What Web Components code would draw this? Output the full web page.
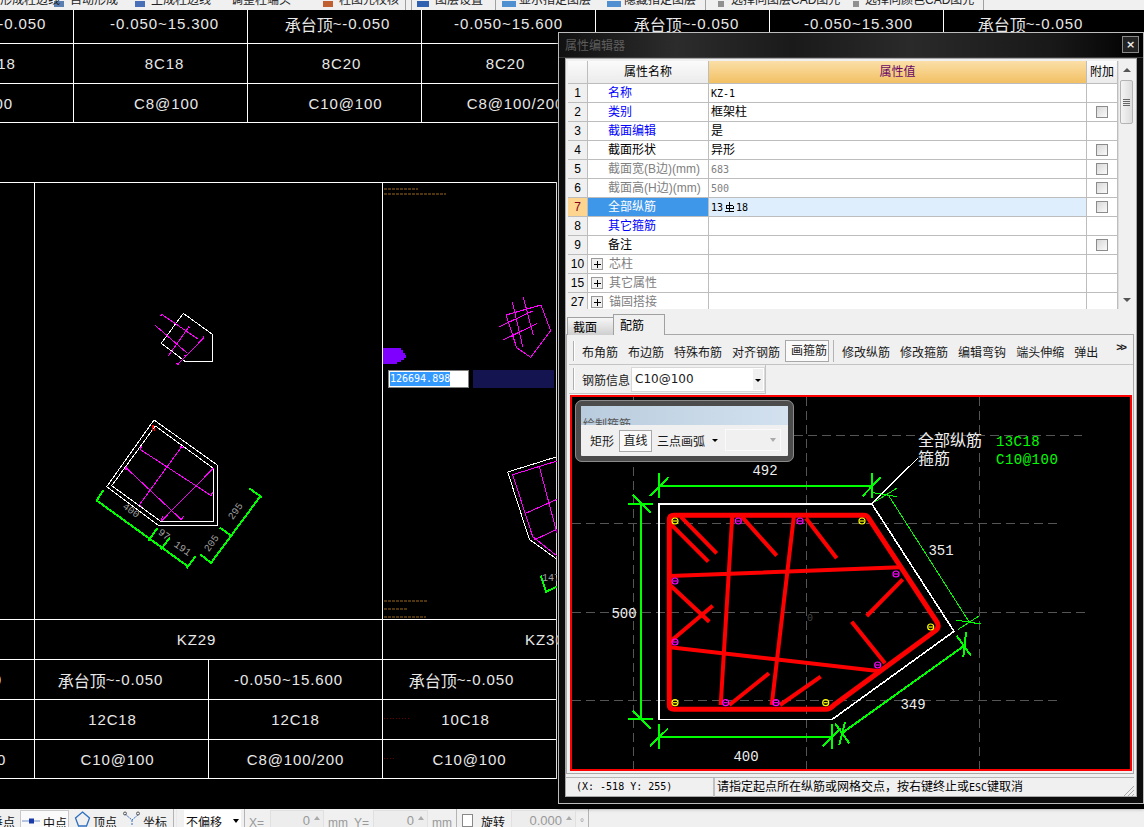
<!DOCTYPE html>
<html lang="zh">
<head>
<meta charset="utf-8">
<title>属性编辑器</title>
<style>
    html, body { margin: 0; height: 100%; background: #000; overflow: hidden; }
    body { font: 12px "Noto Sans CJK SC", "Liberation Sans", sans-serif; }
</style>
</head>
<body>
<app-shell></app-shell>
<script>
const UI_FONT = `"Liberation Sans", "Noto Sans CJK SC", sans-serif`;
const CAD_FONT = `"Liberation Mono", "Noto Sans CJK SC", monospace`;
const TABLE_FONT = `"Liberation Sans", "Noto Sans CJK SC", sans-serif`;
const SMALL_MONO = `"DejaVu Sans Mono", "Noto Sans CJK SC", monospace`;

class TopBar extends HTMLElement {
    constructor() {
        super();
        this.attachShadow({ mode: 'open' });
        this.shadowRoot.innerHTML = `
            <style>
                :host {
                    display: flex;
                    align-items: flex-end;
                    height: 10px;
                    overflow: hidden;
                    background: #f0f0f0;
                    font: 12px ${UI_FONT};
                    color: #222;
                    white-space: nowrap;
                }
                span { display: block; line-height: 16px; position: relative; top: -2px; flex: none; }
                i { display: block; flex: none; width: 10px; height: 6px; margin-bottom: 3px; }
                b { display: block; flex: none; width: 1px; height: 10px; background: #a0a0a0; }
            </style>
            <span style="width:50px">形成柱边线</span>
            <i style="margin-left:4px;background:#5a7fb0"></i>
            <span style="margin-left:6px;width:50px">自动形成</span>
            <i style="margin-left:15px;background:#4870b8"></i>
            <span style="margin-left:6px;width:72px">生成柱边线</span>
            <span style="margin-left:8px;width:82px">调整柱端头</span>
            <i style="margin-left:10px;background:#c06030"></i>
            <span style="margin-left:6px;width:60px">柱图元校核</span>
            <b style="margin-left:6px"></b>
            <b style="margin-left:5px"></b>
            <i style="margin-left:5px;background:#3060b0;width:12px"></i>
            <span style="margin-left:6px;width:56px">图层设置</span>
            <b style="margin-left:4px"></b>
            <i style="margin-left:6px;background:#5090d0;width:14px"></i>
            <span style="margin-left:3px;width:78px">显示指定图层</span>
            <i style="margin-left:10px;background:#5090d0;width:14px"></i>
            <span style="margin-left:3px;width:72px">隐藏指定图层</span>
            <b style="margin-left:9px"></b>
            <i style="margin-left:12px;background:#909090;width:6px"></i>
            <span style="margin-left:7px;width:118px">选择同图层CAD图元</span>
            <i style="margin-left:4px;background:#909090;width:6px"></i>
            <span style="margin-left:6px;width:112px">选择同颜色CAD图元</span>
            <b style="margin-left:6px"></b>
        `;
    }
}

class CadSheet extends HTMLElement {
    constructor() {
        super();
        this.attachShadow({ mode: 'open' });
        const wrap = t => t.replace(/[\u4e00-\u9fff]+/g, m => `<span class="c">${m}</span>`);
        const cell = (t, extra = '') => `<div class="cell" style="${extra}">${wrap(t)}</div>`;
        // [text, padding that nudges it off the centre of the cell]
        const top = [
            [['承台顶~-0.050', 'padding-left:14px'], ['-0.050~15.300', 'padding-left:8px'], ['承台顶~-0.050', 'padding-left:6px'], ['-0.050~15.600', ''], ['承台顶~-0.050', 'padding-left:8px'], ['-0.050~15.300', 'padding-left:4px'], ['承台顶~-0.050', '']],
            [['12C18', 'padding-left:10px'], ['8C18', 'padding-left:8px'], ['8C20', 'padding-left:14px'], ['8C20', 'padding-right:6px'], ['', ''], ['', ''], ['', '']],
            [['C8@100', 'padding-right:12px'], ['C8@100', 'padding-left:12px'], ['C10@100', 'padding-left:22px'], ['C8@100/200', 'padding-left:14px'], ['', ''], ['', ''], ['', '']]
        ];
        const rowStyle = ['padding-bottom:6px;', '', ''];
        const topCells = top.map((r, i) => r.map(([t, s]) => cell(t, rowStyle[i] + s)).join('')).join('');
        const end = 'border-right:1px solid #fff;width:175px;';
        const foot = 'border-bottom:1px solid #fff;';
        this.shadowRoot.innerHTML = `
            <style>
                :host {
                    display: block;
                    height: 100%;
                    background: #000;
                    color: #e8e8e8;
                    font: 15px ${TABLE_FONT};
                    letter-spacing: .9px;
                    overflow: hidden;
                }
                .grid { display: grid; grid-template-columns: repeat(7, 174px); }
                .top { margin-left: -101px; grid-template-rows: 34px 40px 39px; width: 1218px; }
                .bottom {
                    margin-left: -140px;
                    margin-top: 59px;
                    width: 697px;
                    grid-template-columns: repeat(4, 174px);
                    grid-template-rows: 437px 40px 40px 40px 40px;
                }
                .cell {
                    box-sizing: border-box;
                    display: flex;
                    align-items: center;
                    justify-content: center;
                    border-left: 1px solid #fff;
                    border-bottom: 1px solid #fff;
                    white-space: nowrap;
                }
                .bottom .cell { border-bottom: 0; border-top: 1px solid #fff; }
                .bottom .end { border-right: 1px solid #fff; width: 175px; }
                .c { font-size: 16px; letter-spacing: 0; }
            </style>
            <div class="grid top">${topCells}</div>
            <div class="grid bottom">
                ${cell('')}
                <div class="cell" style="grid-column: span 2"></div>
                <div class="cell end"></div>
                ${cell('')}
                <div class="cell" style="grid-column: span 2; padding-right: 24px">KZ29</div>
                <div class="cell end" style="justify-content:flex-start; padding-left:142px">KZ30</div>
                ${cell('-0.050~15.600')}${cell('承台顶~-0.050', 'padding-right:22px')}${cell('-0.050~15.600', 'padding-right:14px')}${cell('承台顶~-0.050', end + 'padding-right:16px')}
                ${cell('')}${cell('12C18', 'padding-right:18px')}${cell('12C18')}${cell('10C18', end + 'padding-right:8px')}
                ${cell('C8@100/200', foot + 'padding-left:20px')}${cell('C10@100', foot + 'padding-right:8px')}${cell('C8@100/200', foot)}${cell('C10@100', foot + end)}
            </div>
        `;
    }
}

class CadDrawings extends HTMLElement {
    constructor() {
        super();
        this.attachShadow({ mode: 'open' });
        this.shadowRoot.innerHTML = `
            <style>
                :host { position: absolute; left: 0; top: 0; display: block; width: 557px; height: 799px; }
                svg { display: block; }
                text { font: 10px ${CAD_FONT}; fill: #a0a0a0; text-anchor: middle; }
            </style>
            <svg width="557" height="799" viewBox="0 10 557 799" fill="none" shape-rendering="crispEdges">
                <g stroke="#fff" stroke-width="1">
                    <path d="M183.3 313.3 212.3 334.3V361.3H185L161.3 343.3Z"/>
                    <path d="M154 420 217.3 465V525.3H158.3L106.7 486.7Z"/>
                    <path d="M155.3 426 213.3 468.3V521.3H160.7L111.7 485.7Z"/>
                    <path d="M557 456.7 507.7 472 529.3 539.3 557 559.3"/>
                </g>
                <g stroke="#f0f" stroke-width="1">
                    <path d="M162.7 315 198.3 339.3M156 326 186.7 352.7M189 326.7 168.3 356M203.3 338.3 178.3 364"/>
                    <path d="M141 450 211.7 496M126.7 468.3 181.7 520M181.7 446.7 139.3 505M213.3 468.3 161.7 520.7"/>
                    <path d="M160 316 163 314M155 325 157 327M187 355 184 356M176 363 179 365M188 326 190 328M203 336 203 339"/>
                    <path d="M142 446 140 449 142 451M180 446 184 448M127 466 125 469 128 470M139 504 142 507M211 495 213 492M161 520 163 516M181 520 184 516"/>
                    <path d="M541 305 550.7 330.7 530.7 357.3 516.7 347.7 506 315Z"/>
                    <path d="M512.3 301.7 522.7 346.7M523.3 297.3 533.3 335M499.3 326.7 533.3 310.7M503.3 340 537.3 323.3"/>
                    <path d="M557 461 512.7 474.7 532.7 536.7 557 556"/>
                    <path d="M539.3 466.7 557 533.3M525.7 513.3 557 499.3M534 540 557 529.3"/>
                </g>
                <path d="M152 431 153 425 155 431" stroke="#f00" stroke-width="1"/>
                <g stroke="#0f0" stroke-width="2">
                    <path d="M96 500 188.3 566.7M103.3 490 96 501.7M157.3 528.3 148.3 540.7M170 537.3 161 549.3M195.7 556 186.7 568.3"/>
                    <path d="M210.7 563.3 260 496.7M200 554.3 211.7 563.3M220 527.7 231.7 536M249.3 488.3 261.7 497.3"/>
                    <path d="M540.7 575.7 546 591.7 557 586.7"/>
                </g>
                <text transform="translate(129.3 513) rotate(35)">400</text>
                <text transform="translate(162.3 537) rotate(35)">97</text>
                <text transform="translate(180.7 551) rotate(35)">191</text>
                <text transform="translate(214 545) rotate(-55)">205</text>
                <text transform="translate(238 513) rotate(-55)">295</text>
                <text x="551" y="581">147</text>
                <path d="M383 348h18v2h2v3h2v2h1v3h-2v2h-3v2h-4v2h-14Z" fill="#7f00ff"/>
                <g stroke="#4f3410" stroke-width="2" stroke-dasharray="3 1">
                    <path d="M384 189h34M384 194h62M384 601h44M384 609h24M384 617h42"/>
                </g>
                <g stroke="#600" stroke-width="1" stroke-dasharray="1 2">
                    <path d="M384 718h26M384 758h10"/>
                </g>
            </svg>
        `;
    }
}

class LengthInput extends HTMLElement {
    constructor() {
        super();
        this.attachShadow({ mode: 'open' });
        this.shadowRoot.innerHTML = `
            <style>
                :host {
                    position: absolute;
                    left: 388px;
                    top: 360px;
                    display: flex;
                    gap: 4px;
                    height: 18px;
                    font: 10px ${SMALL_MONO};
                }
                .box {
                    box-sizing: border-box;
                    width: 81px;
                    background: #fff;
                    border: 1px solid #808080;
                    padding: 1px 1px;
                }
                .sel { display: inline-block; background: #3399ff; color: #fff; line-height: 14px; white-space: nowrap; }
                .navy { width: 81px; background: #141450; }
            </style>
            <div class="box"><span class="sel"><slot></slot></span></div>
            <div class="navy"></div>
        `;
    }
}

class PropGrid extends HTMLElement {
    constructor() {
        super();
        this.attachShadow({ mode: 'open' });
        const rows = [
            ['1', '名称', 'KZ-1', 'b', 0],
            ['2', '类别', '框架柱', 'b', 1],
            ['3', '截面编辑', '是', 'b', 0],
            ['4', '截面形状', '异形', '', 1],
            ['5', '截面宽(B边)(mm)', '683', 'g', 1],
            ['6', '截面高(H边)(mm)', '500', 'g', 1],
            ['7', '全部纵筋', 'SEL', 's', 1],
            ['8', '其它箍筋', '', 'b', 0],
            ['9', '备注', '', '', 1],
            ['10', '芯柱', '', 'e', 0],
            ['15', '其它属性', '', 'e', 0],
            ['27', '锚固搭接', '', 'e', 0]
        ];
        const bar = `<span class="m">13</span><svg width="11" height="12" viewBox="0 0 11 12" style="margin:0 1px" fill="none" stroke="#000" shape-rendering="crispEdges"><path d="M5.500 1v9M2 4.500h7M2 4.500v3h7v-3M1 10.500h9"/></svg><span class="m">18</span>`;
        const value = v => v === 'SEL' ? bar : /^[\x20-\x7e]+$/.test(v) ? `<span class="m">${v}</span>` : v;
        const body = rows.map(([n, name, val, k, chk]) => `
            <div class="n ${k === 's' ? 'ns' : ''}">${n}</div>
            <div class="name ${k}">${k === 'e' ? '<i class="plus"></i>' : ''}<span>${name}</span></div>
            <div class="val ${k === 'g' ? 'g' : ''} ${k === 's' ? 'vs' : ''}">${value(val)}</div>
            <div class="add">${chk ? '<i class="chk"></i>' : ''}</div>`).join('');
        this.shadowRoot.innerHTML = `
            <style>
                :host {
                    display: flex;
                    height: 248px;
                    overflow: hidden;
                    background: #fff;
                    font: 12px ${UI_FONT};
                    color: #000;
                }
                .grid {
                    flex: none;
                    width: 550px;
                    display: grid;
                    grid-template-columns: 20px 121px 378px 31px;
                    grid-template-rows: 23px repeat(12, 19px);
                }
                .grid > div {
                    box-sizing: border-box;
                    border-right: 1px solid #bdbdbd;
                    border-bottom: 1px solid #bdbdbd;
                    display: flex;
                    align-items: center;
                    white-space: nowrap;
                    line-height: 16px;
                }
                .h { background: linear-gradient(#fbfbfb, #ebebeb); justify-content: center; }
                .hv { background: linear-gradient(#fbdfa8, #f2c064); color: #680868; justify-content: center; }
                .n { background: #f0f0f0; justify-content: center; font-size: 12px; }
                .ns { background: #fdd58e; color: #800020; }
                .name { padding-left: 20px; }
                .name.b { color: #0000ff; }
                .name.g, .name.e { color: #808080; }
                .name.e { padding-left: 3px; }
                .name.s { background: #3f97ea; color: #fff; }
                .val { padding-left: 2px; }
                .val.g { color: #808080; }
                .val.vs { background: #deeefd; }
                .m { font: 10px ${SMALL_MONO}; }
                .add { justify-content: center; }
                .chk {
                    display: block;
                    width: 12px;
                    height: 12px;
                    box-sizing: border-box;
                    border: 1px solid #8c8c8c;
                    background: linear-gradient(135deg, #d8d8d8, #fafafa);
                }
                .plus {
                    display: block;
                    flex: none;
                    position: relative;
                    width: 12px;
                    height: 12px;
                    box-sizing: border-box;
                    border: 1px solid #999;
                    margin-right: 6px;
                    background:
                        linear-gradient(#000, #000) center / 7px 1px no-repeat,
                        linear-gradient(#000, #000) center / 1px 7px no-repeat,
                        #f0f0f0;
                }
                .scroll {
                    flex: 1;
                    background: #f0f0f0;
                    border-left: 1px solid #ddd;
                    position: relative;
                }
                .up, .down { width: 0; height: 0; border: 4px solid transparent; position: absolute; left: 4px; }
                .up { border-bottom: 4px solid #555; top: 3px; }
                .down { border-top: 4px solid #555; bottom: 3px; }
                .thumb {
                    position: absolute;
                    top: 19px;
                    left: 1px;
                    width: 13px;
                    height: 44px;
                    box-sizing: border-box;
                    border: 1px solid #b4b4b4;
                    border-radius: 2px;
                    background:
                        repeating-linear-gradient(#666 0 1px, transparent 1px 2px) center / 7px 7px no-repeat,
                        linear-gradient(90deg, #f4f4f4, #dcdcdc);
                }
            </style>
            <div class="grid">
                <div class="h"></div>
                <div class="h">属性名称</div>
                <div class="hv">属性值</div>
                <div class="h">附加</div>
                ${body}
            </div>
            <div class="scroll"><div class="up"></div><div class="thumb"></div><div class="down"></div></div>
        `;
    }
}

class TabStrip extends HTMLElement {
    constructor() {
        super();
        this.attachShadow({ mode: 'open' });
        this.shadowRoot.innerHTML = `
            <style>
                :host {
                    display: flex;
                    align-items: flex-end;
                    height: 21px;
                    margin: 5px 0 -1px 1px;
                    font: 12px ${UI_FONT};
                    position: relative;
                    z-index: 1;
                }
                div { box-sizing: border-box; border: 1px solid #a0a0a0; display: flex; align-items: center; }
                .off { width: 46px; height: 18px; padding-left: 5px; border-right: 0; background: linear-gradient(#f6f6f6, #cfcfcf); border-bottom: 0; }
                .on { width: 52px; height: 21px; padding: 0 0 2px 6px; background: #f0f0f0; border-bottom: 0; }
            </style>
            <div class="off">截面</div>
            <div class="on">配筋</div>
        `;
    }
}

class ToolRow extends HTMLElement {
    constructor() {
        super();
        this.attachShadow({ mode: 'open' });
        this.shadowRoot.innerHTML = `
            <style>
                :host {
                    display: flex;
                    align-items: center;
                    box-sizing: border-box;
                    height: 27px;
                    padding-left: 13px;
                    gap: 10px;
                    border-bottom: 1px solid #c4c4c4;
                    background: #f0f0f0;
                    font: 12px ${UI_FONT};
                    white-space: nowrap;
                    position: relative;
                    color: #1a1a1a;
                }
                :host::before {
                    content: "";
                    position: absolute;
                    left: 4px;
                    top: 3px;
                    bottom: 3px;
                    width: 1px;
                    background: #b0b0b0;
                    border-right: 1px solid #fff;
                }
                :host([compact]) { border-right: 1px solid #c4c4c4; height: 29px; width: 197px; padding-left: 13px; gap: 1px; }
                ::slotted(.on) {
                    box-sizing: border-box;
                    height: 22px;
                    line-height: 20px;
                    padding: 0 1px 0 5px;
                    margin: 0 -5px;
                    border: 1px solid #a8a8a8;
                    background: #fafafa;
                }
                ::slotted(.sep) { width: 1px; height: 22px; background: #b4b4b4; margin: 0 -2px 0 -1px; }
                ::slotted(.more) { position: absolute; right: 8px; top: 3px; font-size: 11px; font-weight: bold; letter-spacing: -2px; line-height: 12px; }
            </style>
            <slot></slot>
        `;
    }
}

class ComboBox extends HTMLElement {
    constructor() {
        super();
        this.attachShadow({ mode: 'open' });
        this.shadowRoot.innerHTML = `
            <style>
                :host {
                    display: flex;
                    align-items: center;
                    box-sizing: border-box;
                    width: 136px;
                    height: 25px;
                    background: #fff;
                    border: 1px solid #d8d8d8;
                    padding-left: 3px;
                    position: relative;
                    font: 12px "DejaVu Sans", sans-serif;
                }
                .btn {
                    position: absolute;
                    right: 1px;
                    top: 1px;
                    bottom: 1px;
                    width: 10px;
                    background: #f0f0f0;
                }
                .btn::after {
                    content: "";
                    position: absolute;
                    left: 2px;
                    top: 10px;
                    border: 3px solid transparent;
                    border-top: 3px solid #000;
                }
            </style>
            <slot></slot><div class="btn"></div>
        `;
    }
}

class RebarCanvas extends HTMLElement {
    constructor() {
        super();
        this.attachShadow({ mode: 'open' });
        const yellow = [[675, 521], [862, 521], [930.7, 627], [675, 702.7], [825.7, 702.7]];
        const magenta = [[738.3, 521], [800, 521], [675, 581], [675, 642], [896, 574], [877.7, 665], [725.7, 702.7], [776, 702.7]];
        const bars = (list, color) => list.map(([x, y]) =>
            `<circle cx="${x}" cy="${y}" r="3" stroke="${color}"/><path d="M${x - 2} ${y}h4" stroke="${color}"/>`).join('');
        this.shadowRoot.innerHTML = `
            <style>
                :host {
                    display: block;
                    position: relative;
                    width: 562px;
                    height: 376px;
                    box-sizing: border-box;
                    margin: 1px 0 0 1px;
                    border: 2px solid #f00;
                    background: #000;
                    overflow: hidden;
                }
                svg { display: block; }
                text { font: 14px ${CAD_FONT}; fill: #eee; text-anchor: middle; }
                .g { fill: #00ff00; text-anchor: start; }
                .l { text-anchor: start; font-size: 16px; }
            </style>
            <svg width="558" height="372" viewBox="572 397 558 372" fill="none" shape-rendering="crispEdges">
                <g stroke="#555" stroke-dasharray="9 5">
                    <path d="M633.500 397V769M806.500 397V769M979.500 397V769"/>
                    <path d="M794 435.500H1082M572 523.500H1062M572 612.500H1090M572 700.500H1062"/>
                </g>
                <path d="M658.700 503.700H871.700L954 631.300 832.300 719.300H658.700Z" stroke="#fff" stroke-width="1.600"/>
                <path d="M871.700 503.700 917.500 458.300" stroke="#fff"/>
                <g stroke="#f00" stroke-width="4" shape-rendering="auto">
                    <path d="M732.300 515.300 720.700 705M794 515.300 771.700 705M670 576 900 567.300M670 647.300 880 671.300"/>
                    <path d="M680.700 516.700 716.700 553.300M670 523.300 708.300 561.700M741.700 516.700 776.700 555.700M806 518.300 836.700 558.300"/>
                    <path d="M670 585 709.300 621.700M670 641.700 712.700 605.700M902.700 579.300 866.700 616M851.700 621.700 885 663.300"/>
                    <path d="M729.300 705 769 673.300M780 705 820.700 676.700"/>
                </g>
                <path d="M669.300 520Q669.300 515.300 674 515.300H864Q867 515.300 868.500 518L937 622Q940 627.500 935 631L834 705Q830 709.300 826 709.300H674Q669.300 709.300 669.300 705Z" stroke="#f00" stroke-width="5" shape-rendering="auto"/>
                <g stroke-width="1.200" shape-rendering="auto">${bars(yellow, '#ffff00')}${bars(magenta, '#ff00ff')}</g>
                <g stroke="#00ff00" stroke-width="2">
                    <path d="M659.300 485.700H871.700M659.300 473V498M650 496 668.300 477.300M871.700 473V498M862.700 496 880.700 477.300"/>
                    <path d="M641 503.300V720M628.300 503.700H653.300M632.700 495 651 512.700M628.300 719.300H653.300M632.700 710.700 651 729"/>
                    <path d="M659.300 736.700H831.700M659.300 724V749.300M650 746 668.300 728.300M831.700 724V749.300M822.700 746 840.700 728.300"/>
                    <path d="M841.700 733.300 964.300 645.700M835 723.300 849.300 743.300M845 721.700 839.300 745M956.700 635.700 971 655.700M966 632.300 963.300 656.700"/>
                </g>
                <g stroke="#00ff00" stroke-width="1">
                    <path d="M888.300 495 969 621.700"/>
                    <path d="M873.300 492.700 897.300 496.700M875 501.700 896.700 488.300M955.700 620 980.700 624M958.300 629.300 979 616"/>
                </g>
                <text x="765" y="475">492</text>
                <text x="941" y="555">351</text>
                <text x="624" y="618">500</text>
                <text x="913" y="709">349</text>
                <text x="746" y="761">400</text>
                <text x="810" y="621" style="font-size:10px;fill:#444">0</text>
                <text class="l" x="918" y="446">全部纵筋</text>
                <text class="l" x="918" y="464">箍筋</text>
                <text class="g" x="996" y="446" style="letter-spacing:.4px">13C18</text>
                <text class="g" x="996" y="464" style="letter-spacing:.5px">C10@100</text>
            </svg>
            <slot></slot>
        `;
    }
}

class FloatPanel extends HTMLElement {
    constructor() {
        super();
        this.attachShadow({ mode: 'open' });
        this.shadowRoot.innerHTML = `
            <style>
                :host {
                    position: absolute;
                    left: 3px;
                    top: 3px;
                    width: 219px;
                    height: 62px;
                    box-sizing: border-box;
                    border: 6px solid #4c4c4c;
                    border-radius: 7px;
                    outline: 1px solid #8a8a8a;
                    outline-offset: -1px;
                    background: #f0f0f0;
                    font: 12px ${UI_FONT};
                    overflow: hidden;
                }
                .title {
                    height: 19px;
                    overflow: hidden;
                    background: linear-gradient(90deg, #b9ccdd, #d3e1ef);
                    color: #555;
                    padding-left: 2px;
                    line-height: 16px;
                }
                .title span { position: relative; top: 11px; display: block; }
                .row { display: flex; align-items: center; height: 31px; padding-left: 9px; white-space: nowrap; gap: 5px; color: #1a1a1a; position: relative; }
                .on { box-sizing: border-box; height: 22px; width: 33px; line-height: 20px; text-align: center; background: #fafafa; border: 1px solid #a8a8a8; }
                .arr { width: 0; height: 0; border: 3px solid transparent; border-top: 3px solid #000; margin: 3px 0 0 2px; }
                .dis { position: absolute; left: 144px; top: 4px; width: 56px; height: 22px; box-sizing: border-box; border: 1px solid #fafafa; }
                .dis::after { content: ""; position: absolute; right: 4px; top: 8px; border: 3px solid transparent; border-top: 4px solid #aaa; }
            </style>
            <div class="title"><span>绘制箍筋</span></div>
            <div class="row">
                <span>矩形</span><span class="on">直线</span><span>三点画弧</span><i class="arr"></i>
                <div class="dis"></div>
            </div>
        `;
    }
}

class StatusRow extends HTMLElement {
    constructor() {
        super();
        this.attachShadow({ mode: 'open' });
        this.shadowRoot.innerHTML = `
            <style>
                :host {
                    display: flex;
                    height: 20px;
                    margin-top: 3px;
                    box-sizing: border-box;
                    border-top: 1px solid #b4b4b4;
                    font: 12px ${UI_FONT};
                    white-space: nowrap;
                    line-height: 18px;
                    position: relative;
                }
                .pos { width: 149px; padding-left: 10px; box-sizing: border-box; border-right: 2px solid #c0c0c0; font: 10px/18px ${SMALL_MONO}; }
                .msg { padding-left: 2px; }
                ::slotted(.esc) { font: 10px ${SMALL_MONO}; }
                svg { position: absolute; right: 0; bottom: 0; }
            </style>
            <div class="pos"><slot name="pos"></slot></div>
            <div class="msg"><slot></slot></div>
            <svg width="12" height="12" stroke="#a8a8a8"><path d="M1 12 12 1M5 12 12 5M9 12 12 9"/></svg>
        `;
    }
}

class PropWindow extends HTMLElement {
    constructor() {
        super();
        this.attachShadow({ mode: 'open' });
        this.shadowRoot.innerHTML = `
            <style>
                :host {
                    position: absolute;
                    left: 558px;
                    top: 22px;
                    width: 586px;
                    height: 772px;
                    box-sizing: border-box;
                    background: #0c0c0c;
                    border: 1px solid #bcbcbc;
                    padding: 0 6px 6px;
                    box-shadow: 0 4px 4px rgba(0,0,0,.6);
                    font: 12px ${UI_FONT};
                    color: #000;
                }
                .title {
                    display: flex;
                    align-items: center;
                    justify-content: space-between;
                    height: 25px;
                    margin: 0 -6px;
                    padding: 0 4px 2px 6px;
                    box-sizing: border-box;
                    color: #5d5d5d;
                    background:
                        linear-gradient(90deg, #111 0, #2c2c2c 20%, #1a1a1a 40%, #2a2a2a 60%, #181818 85%, #000 100%);
                    border-bottom: 1px solid #3a3a3a;
                }
                .close {
                    box-sizing: border-box;
                    width: 17px;
                    height: 17px;
                    border: 1px solid #888;
                    color: #eee;
                    background: #222;
                    font: bold 11px/15px "DejaVu Sans", sans-serif;
                    text-align: center;
                }
                .body {
                    box-sizing: border-box;
                    height: 739px;
                    padding: 2px 2px 0 0;
                    background: #f0f0f0;
                    border: 1px solid #a8a8a8;
                }
                .panel {
                    box-sizing: border-box;
                    height: 440px;
                    border: 1px solid #a8a8a8;
                    padding: 3px 0 0 2px;
                    background: #f0f0f0;
                }
                prop-grid { margin-left: 2px; margin-right: 1px; }
            </style>
            <div class="title"><span>属性编辑器</span><div class="close">×</div></div>
            <div class="body">
                <prop-grid></prop-grid>
                <tab-strip></tab-strip>
                <div class="panel"><slot name="panel"></slot></div>
                <slot name="status"></slot>
            </div>
        `;
    }
}

class BottomBar extends HTMLElement {
    constructor() {
        super();
        this.attachShadow({ mode: 'open' });
        this.shadowRoot.innerHTML = `
            <style>
                :host {
                    display: flex;
                    align-items: flex-start;
                    height: 18px;
                    overflow: hidden;
                    background: #f0f0f0;
                    font: 12px ${UI_FONT};
                    white-space: nowrap;
                    color: #111;
                }
                .t { flex: none; margin-top: 6px; line-height: 16px; }
                .g { color: #999; }
                svg { flex: none; margin-top: 2px; display: block; }
                .on { flex: none; display: flex; gap: 3px; box-sizing: border-box; height: 20px; border: 1px solid #c8c8c8; background: #fafafa; padding-left: 1px; margin-top: 1px; width: 49px; }
                .on .t { margin-top: 5px; }
                .on svg { margin-top: 4px; }
                .sep { flex: none; width: 1px; height: 18px; background: #b4b4b4; }
                .input { flex: none; box-sizing: border-box; height: 18px; margin-top: 1px; background: #ededed; border: 1px solid #e0e0e0; color: #999; text-align: right; line-height: 20px; padding-right: 13px; position: relative; font-size: 13px; }
                .input::after { content: ""; position: absolute; right: 3px; top: 2px; border: 3px solid transparent; border-bottom: 4px solid #aaa; }
                .combo { flex: none; margin-top: 1px; box-sizing: border-box; width: 57px; height: 18px; background: #fff; padding: 5px 0 0 2px; position: relative; line-height: 16px; }
                .combo::after { content: ""; position: absolute; right: 2px; top: 9px; border: 3px solid transparent; border-top: 4px solid #000; }
                .chk { flex: none; display: block; margin-top: 5px; box-sizing: border-box; width: 11px; height: 13px; border: 1px solid #888; background: #fff; }
            </style>
            <span class="t" style="width:15px;direction:rtl;overflow:hidden">垂点</span>
            <div class="on" style="margin-left:5px">
                <svg width="18" height="12" fill="none"><path d="M0 6h18" stroke="#7090c8"/><rect x="7" y="3.500" width="5" height="5" fill="#1a3aa8"/></svg>
                <span class="t">中点</span>
            </div>
            <svg style="margin:2px 0 0 5px" width="17" height="16" fill="none" stroke="#2f6fc0" stroke-width="1.300"><path d="M8.500 1 15.500 7 12.500 15H4.500L1.500 7Z"/></svg>
            <span class="t" style="margin-left:2px">顶点</span>
            <svg style="margin:2px 0 0 6px" width="18" height="16" fill="none" stroke="#2f6fc0"><path d="M2 3 9 9 16 3M9 9V15" stroke-dasharray="2 1"/><circle cx="2" cy="2.500" r="1.500" stroke="#555"/><circle cx="15" cy="2.500" r="1.500" stroke="#555"/></svg>
            <span class="t" style="margin-left:2px">坐标</span>
            <div class="sep" style="margin-left:6px"></div>
            <div class="sep" style="margin-left:2px;background:#e8e8e8"></div>
            <div class="combo" style="margin-left:7px">不偏移</div>
            <div class="sep" style="margin-left:3px"></div>
            <span class="t g" style="margin-left:4px;width:21px">X=</span>
            <div class="input" style="width:54px">0</div>
            <span class="t g" style="margin-left:4px;width:26px">mm</span>
            <span class="t g" style="width:19px">Y=</span>
            <div class="input" style="width:55px">0</div>
            <span class="t g" style="margin-left:4px;width:24px">mm</span>
            <div class="sep"></div>
            <i class="chk" style="margin-left:5px"></i>
            <span class="t" style="margin-left:8px">旋转</span>
            <div class="input" style="margin-left:6px;width:65px">0.000</div>
            <span class="t g" style="margin-left:4px;width:8px;font-size:10px">°</span>
            <div class="sep"></div>
        `;
    }
}

class AppShell extends HTMLElement {
    constructor() {
        super();
        this.attachShadow({ mode: 'open' });
        this.shadowRoot.innerHTML = `
            <style>
                :host {
                    display: flex;
                    flex-direction: column;
                    width: 1144px;
                    height: 827px;
                    overflow: hidden;
                }
                .canvas { flex: 1; position: relative; min-height: 0; }
            </style>
            <top-bar></top-bar>
            <div class="canvas">
                <cad-sheet></cad-sheet>
                <cad-drawings></cad-drawings>
                <length-input>126694.898</length-input>
                <prop-window>
                    <tool-row slot="panel">
                        <span>布角筋</span><span>布边筋</span><span>特殊布筋</span><span>对齐钢筋</span>
                        <span class="on">画箍筋</span><i class="sep"></i>
                        <span>修改纵筋</span><span>修改箍筋</span><span>编辑弯钩</span><span>端头伸缩</span><span>弹出</span>
                        <span class="more">&gt;&gt;</span>
                    </tool-row>
                    <tool-row slot="panel" compact>
                        <span>钢筋信息</span><combo-box>C10@100</combo-box>
                    </tool-row>
                    <rebar-canvas slot="panel"><float-panel></float-panel></rebar-canvas>
                    <status-row slot="status"><span slot="pos">(X: -518 Y: 255)</span>请指定起点所在纵筋或网格交点，按右键终止或<span class="esc">ESC</span>键取消</status-row>
                </prop-window>
            </div>
            <bottom-bar></bottom-bar>
        `;
    }
}

customElements.define('top-bar', TopBar);
customElements.define('cad-sheet', CadSheet);
customElements.define('cad-drawings', CadDrawings);
customElements.define('length-input', LengthInput);
customElements.define('prop-grid', PropGrid);
customElements.define('tab-strip', TabStrip);
customElements.define('tool-row', ToolRow);
customElements.define('combo-box', ComboBox);
customElements.define('rebar-canvas', RebarCanvas);
customElements.define('float-panel', FloatPanel);
customElements.define('status-row', StatusRow);
customElements.define('prop-window', PropWindow);
customElements.define('bottom-bar', BottomBar);
customElements.define('app-shell', AppShell);
</script>
</body>
</html>
